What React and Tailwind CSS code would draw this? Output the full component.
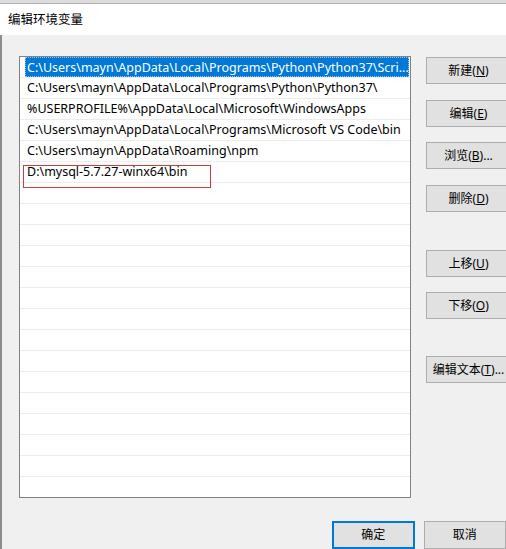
import React from "react";

const rows = [
  "C:\\Users\\mayn\\AppData\\Local\\Programs\\Python\\Python37\\Scri...",
  "C:\\Users\\mayn\\AppData\\Local\\Programs\\Python\\Python37\\",
  "%USERPROFILE%\\AppData\\Local\\Microsoft\\WindowsApps",
  "C:\\Users\\mayn\\AppData\\Local\\Programs\\Microsoft VS Code\\bin",
  "C:\\Users\\mayn\\AppData\\Roaming\\npm",
  "D:\\mysql-5.7.27-winx64\\bin",
];

const font = { fontFamily: '"Noto Sans", "Noto Sans CJK SC", sans-serif' };

function Btn({ label, k, suffix = "", className = "", primary = false }) {
  return (
    <div
      className={
        "w-[85px] h-[27px] flex items-center justify-center text-[12px] text-black bg-[#e1e1e1] " +
        (primary ? "border-2 border-[#0078d7] " : "border border-[#adadad] ") +
        className
      }
    >
      <span>
        {label}
        {k ? (
          <>
            (<span className="underline">{k}</span>)
          </>
        ) : null}
        {suffix}
      </span>
    </div>
  );
}

export default function App() {
  const all = [...rows];
  while (all.length < 21) all.push("");
  return (
    <div className="w-[506px] h-[549px] overflow-hidden bg-[#f0f0f0] flex flex-col" style={font}>
      <div className="h-[4px] bg-[#dcdcdc] border-b border-[#b0b0b0] shrink-0" />
      <div className="h-[31px] bg-white shrink-0 flex items-center pl-[8px] text-[12.5px] text-black pt-[2px]">
        编辑环境变量
      </div>
      <div className="flex-1 border-l-2 border-[#8c8c8c] flex flex-col">
        <div className="flex pt-[21px] pl-[17px]">
          <div className="w-[392px] h-[442px] border border-[#828282] bg-white overflow-hidden shrink-0">
            {all.map((r, i) => (
              <div key={i} className="h-[21px] border-b border-[#ececec] relative">
                {i === 0 ? (
                  <div className="absolute left-[5px] right-[1px] top-0 bottom-0 bg-[#0078d7] border border-dotted border-[#9cc4ea] text-white text-[12.5px] leading-[19px] pl-[1px] whitespace-nowrap overflow-hidden">
                    {r}
                  </div>
                ) : (
                  <div className="pl-[7px] text-[12.5px] leading-[20px] text-black whitespace-nowrap">{r}</div>
                )}
                {i === 5 ? (
                  <div className="absolute left-[3px] top-[3px] w-[188px] h-[23px] border border-[#d03c3c]" />
                ) : null}
              </div>
            ))}
          </div>
          <div className="ml-[15px] pt-[1px] flex flex-col shrink-0">
            <Btn label="新建" k="N" />
            <Btn label="编辑" k="E" className="mt-[16px]" />
            <Btn label="浏览" k="B" suffix="..." className="mt-[15px]" />
            <Btn label="删除" k="D" className="mt-[16px]" />
            <Btn label="上移" k="U" className="mt-[38px]" />
            <Btn label="下移" k="O" className="mt-[15px]" />
            <Btn label="编辑文本" k="T" suffix="..." className="mt-[37px]" />
          </div>
        </div>
        <div className="flex pl-[330px] mt-[23px] gap-[9px]">
          <Btn label="确定" primary className="h-[28px]" />
          <Btn label="取消" className="h-[28px]" />
        </div>
      </div>
    </div>
  );
}
